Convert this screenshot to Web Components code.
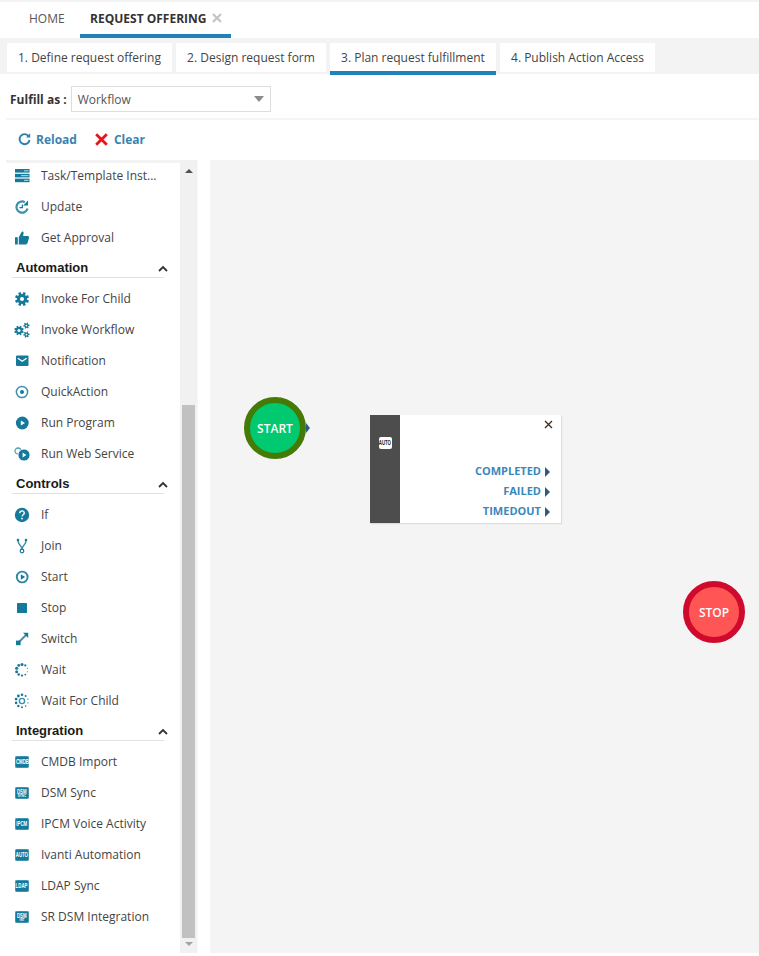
<!DOCTYPE html>
<html>
<head>
<meta charset="utf-8">
<title>Request Offering</title>
<style>
  html, body { margin: 0; padding: 0; background: #fff; }
  body { font-family: "Open Sans", sans-serif; color: #333; width: 759px; height: 956px; overflow: hidden; }
  offering-app { display: block; }
</style>
</head>
<body>
<offering-app></offering-app>

<script>
const TEAL = "#14799b";

// chunky gear: body disc, white hole and n rotated teeth
const gear = (cx, cy, r, hole, n, tw, th) => {
  let teeth = "";
  for (let i = 0; i < n; i++) {
    const deg = (360 / n) * i + 22.5;
    teeth += `<rect x="${cx - tw / 2}" y="${cy - r - th}" width="${tw}" height="${th + 1}" fill="${TEAL}" transform="rotate(${deg} ${cx} ${cy})"/>`;
  }
  return `${teeth}<circle cx="${cx}" cy="${cy}" r="${r}" fill="${TEAL}"/><circle cx="${cx}" cy="${cy}" r="${hole}" fill="#fff"/>`;
};

const ringDots = (r, sizes) => sizes.map((s, i) => {
  const a = (i / sizes.length) * 2 * Math.PI - Math.PI / 2;
  return `<circle cx="${(8 + r * Math.cos(a)).toFixed(2)}" cy="${(8 + r * Math.sin(a)).toFixed(2)}" r="${s}" fill="${TEAL}"/>`;
}).join("");

const ICONS = {
  task: `<rect x="1" y="1" width="14.5" height="3.6" fill="${TEAL}"/><rect x="1" y="5.8" width="14.5" height="3.6" fill="${TEAL}"/><rect x="1" y="10.6" width="14.5" height="3.6" fill="${TEAL}"/><rect x="10" y="2.2" width="4.5" height="1.2" fill="#9fcbd9"/><rect x="7" y="7" width="7.5" height="1.2" fill="#9fcbd9"/><rect x="10" y="11.8" width="4.5" height="1.2" fill="#9fcbd9"/>`,
  update: `<path d="M13.5 9.4A5.6 5.6 0 1 1 10.8 3.2" fill="none" stroke="#3d8fab" stroke-width="2.2"/><path d="M14 1.6v4.8H9.2z" fill="${TEAL}"/><path d="M8.4 5.6v3h-3" fill="none" stroke="${TEAL}" stroke-width="1.3"/>`,
  thumb: `<path d="M1 7.2h2.8v7.3H1zM4.8 7.2 7.6 2c.3-.8 2-.7 2 .9l-.5 3.2h4.6c1 0 1.6.9 1.3 1.8l-1.6 5.4c-.2.7-.8 1.2-1.6 1.2H4.8z" fill="${TEAL}"/>`,
  gear: gear(8, 8, 5, 2, 8, 2.6, 2),
  gears: gear(5, 8.5, 3.4, 1.5, 8, 1.8, 1.4) + gear(12.4, 3.6, 2.2, 0.9, 6, 1.2, 1) + gear(12.4, 12.6, 2.2, 0.9, 6, 1.2, 1),
  mail: `<rect x="2" y="2.5" width="12.5" height="10.5" rx="1" fill="${TEAL}"/><path d="M3.8 5.2 8.2 8.2l4.4-3" fill="none" stroke="#fff" stroke-width="1.3"/>`,
  quick: `<circle cx="8" cy="8" r="5.6" fill="none" stroke="#3d8fab" stroke-width="1.5"/><circle cx="8" cy="8" r="2" fill="${TEAL}"/>`,
  play: `<circle cx="8.3" cy="8" r="6.4" fill="${TEAL}"/><path d="M6.8 5.4v5.2L11 8z" fill="#fff"/>`,
  web: `<circle cx="4" cy="5" r="3" fill="none" stroke="#5a9fb8" stroke-width="1.3"/><circle cx="10" cy="9" r="6" fill="${TEAL}" stroke="#fff" stroke-width="0.8"/><path d="M8.6 6.6v4.8L12.4 9z" fill="#fff"/>`,
  if: `<circle cx="8" cy="8" r="7.2" fill="${TEAL}"/><path d="M5.8 6.2c0-3 4.5-3 4.5-.2 0 1.7-2.3 1.8-2.3 3.6" fill="none" stroke="#fff" stroke-width="1.4"/><rect x="7.2" y="10.8" width="1.6" height="1.6" fill="#fff"/>`,
  join: `<path d="M4 2.5c0 5 4 4.5 4 9M12 2.5c0 5-4 4.5-4 9" fill="none" stroke="#3d8fab" stroke-width="1.5"/><circle cx="4" cy="2" r="1.3" fill="${TEAL}"/><circle cx="12" cy="2" r="1.3" fill="${TEAL}"/><circle cx="8" cy="13" r="1.8" fill="none" stroke="${TEAL}" stroke-width="1.2"/>`,
  start: `<circle cx="8.2" cy="8" r="5.4" fill="none" stroke="#2a86a6" stroke-width="1.9"/><path d="M6.8 5.2v5.6L11.2 8z" fill="${TEAL}"/>`,
  stop: `<rect x="3" y="3" width="10" height="10" rx="0.6" fill="${TEAL}"/>`,
  "switch": `<path d="M4 12 12 4" stroke="#3d8fab" stroke-width="1.8"/><rect x="2" y="9.6" width="4.6" height="4.6" fill="${TEAL}"/><path d="M9 1.8h5.2V7z" fill="${TEAL}"/>`,
  wait: ringDots(5.6, [1.5, 1.1, 0.6, 0.6, 0.9, 1.1, 1.3, 1.5, 1.6, 1.4]),
  waitchild: ringDots(6.2, [1.3, 1, 0.7, 0.6, 0.8, 1, 1.2, 1.3, 1.4, 1.4]) + `<circle cx="8" cy="8" r="2.6" fill="none" stroke="#3d8fab" stroke-width="1.4"/>`
};

const svgIcon = (name) => `<svg width="16" height="16" viewBox="0 0 16 16" aria-hidden="true">${ICONS[name] || ""}</svg>`;

/* top level tab */
const topTabTemplate = document.createElement("template");
topTabTemplate.innerHTML = `
<style>
  :host { display: flex; align-items: center; height: 32px; padding: 0 15.4px 0 10px; font-size: 12px; color: #555; border-bottom: 4px solid transparent; }
  :host([active]) { padding-right: 9px; font-weight: 700; color: #333; border-bottom-color: #1f82b9; }
  .close { display: none; margin-left: 5px; }
  :host([active]) .close { display: block; }
</style>
<slot></slot>
<svg class="close" width="10" height="10" viewBox="0 0 10 10"><path d="M1 1l8 8M9 1l-8 8" stroke="#c4c4c4" stroke-width="2.2"/></svg>
`;
class TopTab extends HTMLElement {
  constructor() {
    super();
    this.attachShadow({ mode: "open" }).appendChild(topTabTemplate.content.cloneNode(true));
  }
}
customElements.define("top-tab", TopTab);

/* wizard step tab */
const stepTabTemplate = document.createElement("template");
stepTabTemplate.innerHTML = `
<style>
  :host { display: flex; align-items: center; height: 29px; padding: 0 11.2px 0 11px; background: #fff; font-size: 12px; color: #444; white-space: nowrap; }
  :host([active]) { height: 28px; border-bottom: 4px solid #1f82b9; }
</style>
<slot></slot>
`;
class StepTab extends HTMLElement {
  constructor() {
    super();
    this.attachShadow({ mode: "open" }).appendChild(stepTabTemplate.content.cloneNode(true));
  }
}
customElements.define("step-tab", StepTab);

/* fulfil select */
const fulfilTemplate = document.createElement("template");
fulfilTemplate.innerHTML = `
<style>
  :host { display: flex; align-items: center; height: 44px; padding: 6px 0 0 10px; box-sizing: border-box; font-size: 12px; }
  label { font-weight: 700; color: #333; margin-right: 4px; white-space: nowrap; }
  .select { display: flex; align-items: center; justify-content: space-between; box-sizing: border-box; width: 200px; height: 26px; padding: 0 6px 0 6px; border: 1px solid #ddd; color: #555; }
  .arrow { width: 0; height: 0; border-left: 5px solid transparent; border-right: 5px solid transparent; border-top: 6px solid #8b8b8b; }
</style>
<label><slot name="label"></slot></label>
<div class="select"><slot></slot><span class="arrow"></span></div>
`;
class FulfilRow extends HTMLElement {
  constructor() {
    super();
    this.attachShadow({ mode: "open" }).appendChild(fulfilTemplate.content.cloneNode(true));
  }
}
customElements.define("fulfil-row", FulfilRow);

/* reload / clear buttons */
const toolButtonTemplate = document.createElement("template");
toolButtonTemplate.innerHTML = `
<style>
  :host { display: inline-flex; align-items: center; gap: 5px; font-size: 12px; font-weight: 700; color: #3a83ae; }
  :host([icon="clear"]) { gap: 6px; }
  svg { display: block; }
</style>
<span id="icon"></span>
<slot></slot>
`;
class ToolButton extends HTMLElement {
  constructor() {
    super();
    this.attachShadow({ mode: "open" }).appendChild(toolButtonTemplate.content.cloneNode(true));
    const icon = this.shadowRoot.querySelector("#icon");
    if (this.getAttribute("icon") === "reload") {
      icon.innerHTML = `<svg width="13" height="13" viewBox="0 0 13 13"><path d="M10.6 3.2A5 5 0 1 0 11.5 7" fill="none" stroke="#2f7ea8" stroke-width="1.9"/><path d="M8 4.4h4.2V0.2z" fill="#2f7ea8"/></svg>`;
    } else {
      icon.innerHTML = `<svg width="13" height="13" viewBox="0 0 13 13"><path d="M1.2 1.2l10.6 10.6M11.8 1.2 1.2 11.8" stroke="#e8141c" stroke-width="2.8"/></svg>`;
    }
  }
}
customElements.define("tool-button", ToolButton);

/* palette row */
const sideItemTemplate = document.createElement("template");
sideItemTemplate.innerHTML = `
<style>
  :host { display: flex; align-items: center; height: 31px; padding-left: 14px; font-size: 12px; color: #444; white-space: nowrap; }
  .icon { width: 17px; height: 16px; margin-right: 10px; flex: none; display: flex; align-items: center; }
  svg { display: block; }
  .badge { display: flex; flex-direction: column; align-items: center; justify-content: center; box-sizing: border-box; width: 14px; height: 12px; margin-left: 1px; border-radius: 2px; background: ${TEAL}; box-shadow: 0 0 0 0.5px #6fb0c6 inset; color: #fff; font: 700 7px/7px "Liberation Sans", sans-serif; }
  .badge b { display: block; transform: scaleX(0.62); white-space: nowrap; }
  .badge i { display: block; font: 700 3px/3px "Liberation Sans", sans-serif; white-space: nowrap; }
</style>
<span class="icon"></span>
<slot></slot>
`;
class SideItem extends HTMLElement {
  constructor() {
    super();
    this.attachShadow({ mode: "open" }).appendChild(sideItemTemplate.content.cloneNode(true));
    const icon = this.shadowRoot.querySelector(".icon");
    const badge = this.getAttribute("badge");
    if (badge) {
      const sub = this.getAttribute("sub");
      icon.innerHTML = `<span class="badge"><b>${badge}</b>${sub ? `<i>${sub}</i>` : ""}</span>`;
    } else {
      icon.innerHTML = svgIcon(this.getAttribute("icon"));
    }
  }
}
customElements.define("side-item", SideItem);

/* palette section heading */
const sideHeadTemplate = document.createElement("template");
sideHeadTemplate.innerHTML = `
<style>
  :host { display: flex; align-items: flex-end; justify-content: space-between; box-sizing: border-box; height: 25px; margin: 0 16px 5px 12px; padding: 0 0 0 4px; border-bottom: 1px solid #e2e2e2; font: 700 13px "Liberation Sans", Arial, sans-serif; color: #1a1a1a; }
  span { line-height: 20px; margin-bottom: -1px; }
  svg { margin: 0 -4px 5px 0; display: block; }
</style>
<span><slot></slot></span>
<svg width="10" height="7" viewBox="0 0 10 7"><path d="M1 6l4-4 4 4" fill="none" stroke="#333" stroke-width="1.8"/></svg>
`;
class SideHead extends HTMLElement {
  constructor() {
    super();
    this.attachShadow({ mode: "open" }).appendChild(sideHeadTemplate.content.cloneNode(true));
  }
}
customElements.define("side-head", SideHead);

/* fake scrollbar of the palette */
const scrollTemplate = document.createElement("template");
scrollTemplate.innerHTML = `
<style>
  :host { display: flex; flex-direction: column; align-items: center; width: 17px; background: #f1f1f1; }
  .up { margin-top: 9px; width: 0; height: 0; border-left: 4px solid transparent; border-right: 4px solid transparent; border-bottom: 4px solid #505050; }
  .thumb { margin-top: 232px; width: 13px; height: 533px; background: #c1c1c1; }
  .down { margin-top: 4px; width: 0; height: 0; border-left: 4px solid transparent; border-right: 4px solid transparent; border-top: 4px solid #a3a3a3; }
</style>
<span class="up"></span>
<span class="thumb"></span>
<span class="down"></span>
`;
class SideScroll extends HTMLElement {
  constructor() {
    super();
    this.attachShadow({ mode: "open" }).appendChild(scrollTemplate.content.cloneNode(true));
  }
}
customElements.define("side-scroll", SideScroll);

/* start and stop nodes */
const flowNodeTemplate = document.createElement("template");
flowNodeTemplate.innerHTML = `
<style>
  :host { position: absolute; box-sizing: border-box; display: flex; align-items: center; justify-content: center; width: 62px; height: 62px; border-radius: 50%; border: 6px solid; font-size: 12px; font-weight: 600; color: #fff; }
  :host([kind="start"]) { left: 34px; top: 237px; background: #00c96f; border-color: #447a05; }
  :host([kind="stop"]) { left: 473px; top: 421px; background: #ff5555; border-color: #cf0a2c; }
  .out { display: none; position: absolute; left: 56px; top: 20px; width: 0; height: 0; border-top: 5px solid transparent; border-bottom: 5px solid transparent; border-left: 4px solid #2f5a84; }
  :host([kind="start"]) .out { display: block; }
</style>
<slot></slot>
<span class="out"></span>
`;
class FlowNode extends HTMLElement {
  constructor() {
    super();
    this.attachShadow({ mode: "open" }).appendChild(flowNodeTemplate.content.cloneNode(true));
  }
}
customElements.define("flow-node", FlowNode);

/* activity card on the canvas */
const flowCardTemplate = document.createElement("template");
flowCardTemplate.innerHTML = `
<style>
  :host { position: absolute; left: 160px; top: 255px; display: flex; width: 191px; height: 108px; background: #fff; box-shadow: 1px 1px 1px #ddd; }
  .strip { flex: none; width: 30px; background: #4d4d4d; display: flex; justify-content: center; padding-top: 22px; box-sizing: border-box; }
  .badge { display: flex; align-items: center; justify-content: center; width: 13px; height: 12px; border-radius: 2px; background: #fff; color: #222; font: 700 7px/12px "Liberation Sans", sans-serif; }
  .badge span { display: block; transform: scaleX(0.62); white-space: nowrap; }
  .body { flex: 1; display: flex; flex-direction: column; }
  .close { align-self: flex-end; margin: 5px 8px 0 0; display: block; }
  .ports { margin-top: 31px; display: flex; flex-direction: column; align-items: flex-end; padding-right: 11px; }
</style>
<div class="strip"><span class="badge"><span><slot name="badge"></slot></span></span></div>
<div class="body">
  <svg class="close" width="9" height="9" viewBox="0 0 9 9"><path d="M1 1l7 7M8 1 1 8" stroke="#3a2a1a" stroke-width="1.3"/></svg>
  <div class="ports"><slot></slot></div>
</div>
`;
class FlowCard extends HTMLElement {
  constructor() {
    super();
    this.attachShadow({ mode: "open" }).appendChild(flowCardTemplate.content.cloneNode(true));
  }
}
customElements.define("flow-card", FlowCard);

const flowPortTemplate = document.createElement("template");
flowPortTemplate.innerHTML = `
<style>
  :host { display: flex; align-items: center; height: 20px; font-size: 11px; font-weight: 700; color: #3a87bd; }
  .tri { margin: 4px 0 0 4px; width: 0; height: 0; border-top: 5px solid transparent; border-bottom: 5px solid transparent; border-left: 5px solid #33597f; }
</style>
<slot></slot>
<span class="tri"></span>
`;
class FlowPort extends HTMLElement {
  constructor() {
    super();
    this.attachShadow({ mode: "open" }).appendChild(flowPortTemplate.content.cloneNode(true));
  }
}
customElements.define("flow-port", FlowPort);

/* whole page */
const appTemplate = document.createElement("template");
appTemplate.innerHTML = `
<style>
  :host { display: block; width: 759px; height: 956px; overflow: hidden; background: #fff; }
  .strip { height: 2px; background: #f3f3f3; }
  .tabs { display: flex; height: 36px; padding-left: 19px; box-sizing: border-box; }
  .steps { display: flex; align-items: flex-start; gap: 4px; height: 36px; padding: 5px 0 0 7px; box-sizing: border-box; background: #f3f3f3; }
  .sep { height: 2px; margin-left: 6px; background: #f5f5f5; }
  .tools { display: flex; align-items: center; gap: 18px; height: 38px; margin-bottom: 2px; padding-left: 18px; box-sizing: border-box; }
  .main { display: flex; height: 793px; }
  .palette { width: 174px; overflow: hidden; border-top: 3px solid #f3f3f3; margin-left: 6px; box-sizing: border-box; }
  .palette-in { margin: -3px 0 0 -6px; }
  .gap { width: 13px; border-left: 1px solid #f8f8f8; box-sizing: border-box; }
  .canvas { position: relative; flex: 1; background: #f4f4f5; }
</style>
<div class="strip"></div>
<nav class="tabs">
  <top-tab>HOME</top-tab>
  <top-tab active>REQUEST OFFERING</top-tab>
</nav>
<nav class="steps">
  <step-tab>1. Define request offering</step-tab>
  <step-tab>2. Design request form</step-tab>
  <step-tab active>3. Plan request fulfillment</step-tab>
  <step-tab>4. Publish Action Access</step-tab>
</nav>
<fulfil-row><span slot="label">Fulfill as :</span>Workflow</fulfil-row>
<div class="sep"></div>
<div class="tools">
  <tool-button icon="reload">Reload</tool-button>
  <tool-button icon="clear">Clear</tool-button>
</div>
<div class="main">
  <div class="palette">
    <div class="palette-in">
      <side-item icon="task">Task/Template Inst...</side-item>
      <side-item icon="update">Update</side-item>
      <side-item icon="thumb">Get Approval</side-item>
      <side-head>Automation</side-head>
      <side-item icon="gear">Invoke For Child</side-item>
      <side-item icon="gears">Invoke Workflow</side-item>
      <side-item icon="mail">Notification</side-item>
      <side-item icon="quick">QuickAction</side-item>
      <side-item icon="play">Run Program</side-item>
      <side-item icon="web">Run Web Service</side-item>
      <side-head>Controls</side-head>
      <side-item icon="if">If</side-item>
      <side-item icon="join">Join</side-item>
      <side-item icon="start">Start</side-item>
      <side-item icon="stop">Stop</side-item>
      <side-item icon="switch">Switch</side-item>
      <side-item icon="wait">Wait</side-item>
      <side-item icon="waitchild">Wait For Child</side-item>
      <side-head>Integration</side-head>
      <side-item badge="CMDB">CMDB Import</side-item>
      <side-item badge="DSM" sub="SYNC">DSM Sync</side-item>
      <side-item badge="IPCM">IPCM Voice Activity</side-item>
      <side-item badge="AUTO">Ivanti Automation</side-item>
      <side-item badge="LDAP">LDAP Sync</side-item>
      <side-item badge="DSM" sub="INT">SR DSM Integration</side-item>
    </div>
  </div>
  <side-scroll></side-scroll>
  <div class="gap"></div>
  <div class="canvas">
    <flow-node kind="start">START</flow-node>
    <flow-card>
      <span slot="badge">AUTO</span>
      <flow-port>COMPLETED</flow-port>
      <flow-port>FAILED</flow-port>
      <flow-port>TIMEDOUT</flow-port>
    </flow-card>
    <flow-node kind="stop">STOP</flow-node>
  </div>
</div>
`;
class OfferingApp extends HTMLElement {
  constructor() {
    super();
    this.attachShadow({ mode: "open" }).appendChild(appTemplate.content.cloneNode(true));
  }
}
customElements.define("offering-app", OfferingApp);
</script>
</body>
</html>
